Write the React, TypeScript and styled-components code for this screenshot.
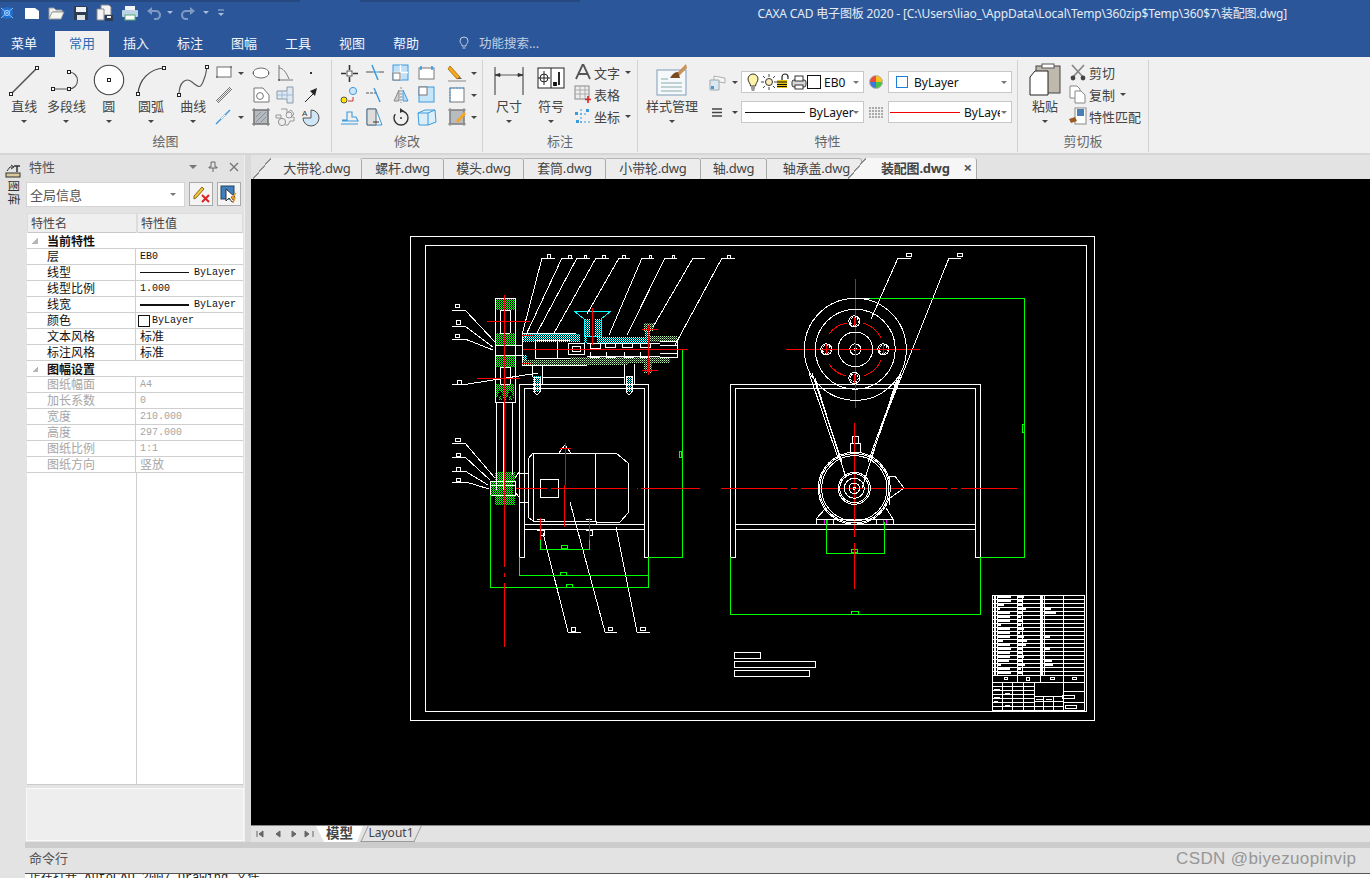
import React from "react";
import styled, { createGlobalStyle } from "styled-components";

const UI = `"Noto Sans", "Noto Sans CJK SC", "Liberation Sans", sans-serif`;
const Global = createGlobalStyle`
  html, body { margin: 0; padding: 0; background: #e3e3e3; overflow: hidden; }
  * { box-sizing: border-box; }
`;

const Page = styled.div`
  position: relative; width: 1370px; height: 878px; overflow: hidden; display: flex; flex-direction: column;
  font-family: ${UI}; font-size: 13px; color: #444; background: #e3e3e3;
`;
const TitleBar = styled.div`
  height: 31px; flex: none; display: flex; align-items: center; padding: 0 83px 6px 0;
  background: linear-gradient(to right, #26497f 0 300px, transparent 300px 360px, #26497f 360px 580px, transparent 580px) 0 0 / 100% 2px no-repeat, #2b579a;
`;
const Quick = styled.div`display: flex; align-items: center; height: 20px;`;
const QSlot = styled.span<{ $w: number }>`width: ${p => p.$w}px; height: 20px; display: flex; align-items: center; justify-content: center; flex: none;`;
const TitleText = styled.div`margin-left: auto; color: #e6ebf3; font-size: 12px; letter-spacing: -0.16px; white-space: nowrap;`;
const MenuBar = styled.div`height: 26px; flex: none; background: #2b579a; display: flex; align-items: stretch;`;
const MenuTab = styled.div<{ $active?: boolean; $w?: number; $pr?: number }>`
  width: ${p => p.$w ?? 54}px; padding: 0 ${p => p.$pr ?? 0}px 3px 0; display: flex; align-items: center; justify-content: center; font-size: 13px;
  color: ${p => (p.$active ? "#2b6cb0" : "#f2f5fa")}; background: ${p => (p.$active ? "#f0f0f0" : "transparent")};
`;
const Search = styled.div`display: flex; align-items: center; gap: 8px; margin-left: 24px; padding-bottom: 3px; color: #c3cfe2; font-size: 12.5px;`;

const Ribbon = styled.div`height: 98px; flex: none; background: #f0f0f0; border-bottom: 2px solid #d6d6d6; display: flex; align-items: flex-start; padding-top: 3px;`;
const Group = styled.div<{ $w: number; $pl?: number; $line?: boolean }>`
  width: ${p => p.$w}px; height: 92px; flex: none; position: relative; display: flex; align-items: flex-start; padding: 2px 0 0 ${p => p.$pl ?? 0}px;
  border-right: ${p => (p.$line === false ? "none" : "1px solid #d2d2d2")};
`;
const GroupLabel = styled.div`position: absolute; left: 0; right: 0; bottom: 2px; height: 18px; line-height: 18px; text-align: center; font-size: 13px; color: #666;`;
const Large = styled.div<{ $w: number }>`width: ${p => p.$w}px; flex: none; display: flex; flex-direction: column; align-items: center;`;
const LargeIcon = styled.div`height: 36px; display: flex; align-items: center; justify-content: center;`;
const LargeLabel = styled.div`height: 18px; line-height: 16px; font-size: 13px; color: #444; white-space: nowrap;`;
const Caret = styled.i<{ $d?: string }>`
  display: block; flex: none; width: 0; height: 0; border-left: 3px solid transparent; border-right: 3px solid transparent; border-top: 3px solid ${p => p.$d ?? "#444"};
`;
const CaretRow = styled.div`height: 10px; display: flex; align-items: center;`;
const SmallGrid = styled.div<{ $cols: string }>`display: grid; grid-template-columns: ${p => p.$cols}; grid-auto-rows: 22px;`;
const Cell = styled.div<{ $left?: boolean }>`display: flex; align-items: center; justify-content: ${p => (p.$left ? "flex-start" : "center")}; gap: 4px; position: relative;`;
const TextRows = styled.div`display: flex; flex-direction: column;`;
const TextRow = styled.div<{ $iw: number }>`
  height: 22px; display: flex; align-items: center; padding-bottom: 2px; font-size: 13px; color: #444; white-space: nowrap;
  & > svg { margin: 0 ${p => (p.$iw - 20) / 2}px; flex: none; }
  & > i { margin-left: 5px; }
`;
const PropRows = styled.div`display: flex; flex-direction: column; gap: 8px; padding-top: 9px;`;
const PropRow = styled.div`display: flex; align-items: center; height: 22px;`;
const PropIcon = styled.div<{ $w: number }>`width: ${p => p.$w}px; flex: none; display: flex; align-items: center; justify-content: center; gap: 5px;`;
const Combo = styled.div<{ $w: number; $pl?: number; $gap?: number }>`
  width: ${p => p.$w}px; height: 22px; flex: none; background: #fff; border: 1px solid #c8c8c8; display: flex; align-items: center; padding: 0 0 0 ${p => p.$pl ?? 3}px; gap: ${p => p.$gap ?? 4}px;
  font-size: 12px; color: #111; overflow: hidden; position: relative;
`;
const ComboCaret = styled.i`position: absolute; right: 4px; top: 9px; width: 0; height: 0; border-left: 3px solid transparent; border-right: 3px solid transparent; border-top: 3px solid #777;`;
const LineSample = styled.span<{ $c: string; $w: number; $h?: number }>`display: inline-block; flex: none; width: ${p => p.$w}px; height: ${p => p.$h ?? 1}px; background: ${p => p.$c};`;
const Swatch = styled.span<{ $c: string; $s?: number }>`display: inline-block; width: ${p => p.$s ?? 12}px; height: ${p => p.$s ?? 12}px; flex: none; border: 1px solid ${p => p.$c}; background: #fff;`;
const Clip = styled.span<{ $w: number }>`display: inline-block; width: ${p => p.$w}px; overflow: hidden; white-space: nowrap; flex: none;`;

const Work = styled.div`flex: 1; display: flex; min-height: 0;`;
const Strip = styled.div`width: 25px; flex: none; display: flex; flex-direction: column; align-items: center; padding-top: 8px; gap: 1px;`;
const StripText = styled.div`writing-mode: vertical-rl; text-orientation: sideways; font-size: 12px; color: #333; line-height: 14px; letter-spacing: 1px;`;
const Panel = styled.div`width: 219px; flex: none; display: flex; flex-direction: column; padding-left: 1px;`;
const PanelHead = styled.div`height: 25px; flex: none; display: flex; align-items: center; padding: 0 5px 2px 3px; font-size: 13px; color: #555; gap: 11px; & > span { margin-right: auto; }`;
const ComboRow = styled.div`display: flex; gap: 3px; height: 28px; flex: none; padding-top: 2px;`;
const PanelCombo = styled.div`width: 159px; height: 25px; background: #fff; border: 1px solid #d4d4d4; display: flex; align-items: center; padding: 0 4px 0 3px; font-size: 13px; color: #555; justify-content: space-between; & > i { margin-right: 4px; }`;
const PanelBtn = styled.div`width: 24px; height: 24px; background: #f4f4f4; border: 1px solid #aaa; display: flex; align-items: center; justify-content: center; margin-left: 1px;`;
const Table = styled.div`margin: 5px 1px 0 1px; height: 572px; flex: none; background: #fff; display: flex; flex-direction: column; position: relative; border-bottom: 1px solid #ccc;`;
const TableHead = styled.div`height: 20px; flex: none; display: grid; grid-template-columns: 110px 1fr; background: #efefef; border-bottom: 1px solid #c8c8c8; font-size: 12px; color: #444;`;
const HeadCell = styled.div`padding-left: 3px; line-height: 19px; border: 1px solid #dcdcdc; border-bottom: none;`;
const Row = styled.div<{ $off?: boolean }>`
  height: 16px; flex: none; display: grid; grid-template-columns: 109px 1fr; border-bottom: 1px solid #cfcfcf; font-size: 12px; line-height: 15px;
  color: ${p => (p.$off ? "#a6a6a6" : "#111")};
`;
const Section = styled.div`height: 16px; flex: none; display: flex; align-items: center; padding-left: 5px; gap: 9px; border-bottom: 1px solid #cfcfcf; font-size: 12px; font-weight: 700; color: #111;`;
const Tri = styled.i`display: block; width: 6px; height: 6px; background: linear-gradient(to top left, #b5b5b5 50%, transparent 50%);`;
const NameCell = styled.div`padding-left: 20px; border-right: 1px solid #cfcfcf; white-space: nowrap;`;
const ValCell = styled.div<{ $mono?: boolean; $pl?: number; $gap?: number }>`
  padding-left: ${p => p.$pl ?? 4}px; display: flex; align-items: center; gap: ${p => p.$gap ?? 5}px; white-space: nowrap;
  font-family: ${p => (p.$mono ? `"Liberation Mono", monospace` : UI)}; font-size: ${p => (p.$mono ? "10px" : "12px")};
`;
const ColLine = styled.div`position: absolute; left: 109px; top: 260px; bottom: 0; width: 1px; background: #cfcfcf;`;
const Desc = styled.div`margin-top: 3px; height: 53px; flex: none; background: #eeeeee; border: 1px solid #fafafa;`;
const Gutter = styled.div`width: 7px; flex: none; background: #dadada; border-left: 1px solid #eee;`;
const Doc = styled.div`flex: 1; display: flex; flex-direction: column; min-width: 0;`;
const DocTabs = styled.div`height: 24px; flex: none; display: flex; padding: 3px 0 0 2px; background: #e3e3e3;`;
const tabFill = (c: string) => `linear-gradient(to top left, ${c} calc(50% - .6px), #8d8d8d calc(50% - .6px) calc(50% + .6px), transparent calc(50% + .6px)) 0 0 / 18px 100% no-repeat, linear-gradient(${c}, ${c}) 18px 0 / 100% 100% no-repeat`;
const DocTab = styled.div<{ $w: number; $pl?: number; $active?: boolean; $slant?: boolean }>`
  width: ${p => p.$w}px; flex: none; height: 21px; display: flex; align-items: center; justify-content: ${p => (p.$active ? "flex-start" : "center")};
  padding: 0 0 3px ${p => p.$pl ?? 0}px; font-size: 13px; letter-spacing: -0.2px; color: #444; font-weight: ${p => (p.$active ? 700 : 400)}; position: relative;
  margin-left: ${p => (p.$active ? "-14px" : "0")};
  border-right: 1px solid #aaa; border-top: ${p => (p.$slant ? "none" : "1px solid #b5b5b5")};
  border-top-right-radius: 3px;
  background: ${p => (p.$slant ? tabFill(p.$active ? "#f6f6f6" : "#ececec") : "#ececec")};
`;
const TabClose = styled.span`position: absolute; right: 4px; top: 1px; font-size: 15px; color: #555; line-height: 16px;`;
const Canvas = styled.svg`display: block; width: 1119px; height: 646px; flex: none; background: #000; shape-rendering: crispEdges;`;
const SheetTabs = styled.div`height: 17px; flex: none; display: flex; align-items: stretch; background: #e3e3e3; border-top: 1px solid #888; position: relative;`;
const NavBtns = styled.div`width: 65px; flex: none; display: flex; align-items: center; padding-left: 3px;`;
const ModelTab = styled.div`
  width: 47px; margin-right: -3px; background: #fff; clip-path: polygon(0 0, 100% 0, calc(100% - 6px) 100%, 8px 100%);
  text-align: center; font-size: 13.5px; line-height: 15px; font-weight: 700; color: #444;
`;
const LayoutTab = styled.div`
  width: 54px; margin-left: 4px; font-size: 12px; line-height: 14px; text-align: center; color: #444; position: relative;
  &::before { content: ""; position: absolute; inset: 0; border: 1px solid #9a9a9a; border-top: none; transform: skewX(-25deg); }
`;
const Sash = styled.div`height: 6px; flex: none; margin-left: 25px; background: #cccccc;`;
const CmdHead = styled.div`height: 25px; flex: none; padding: 0 0 0 29px; line-height: 21px; font-size: 13px; color: #555;`;
const Terminal = styled.div`height: 5px; flex: none; margin-left: 25px; background: #fff; border-top: 1px solid #555; overflow: hidden; padding-left: 4px; font-family: "Liberation Mono", "Noto Sans CJK SC", monospace; font-size: 12px; line-height: 8px; color: #222; white-space: nowrap;`;
const Watermark = styled.div`position: absolute; left: 1176px; top: 848px; font-size: 17px; line-height: 22px; color: #969696; letter-spacing: 0.38px; white-space: nowrap; font-family: "Liberation Sans", sans-serif;`;

/* ---------- icons ---------- */
const I = ({ w = 20, h = 20, children }: { w?: number; h?: number; children: React.ReactNode }) => (
  <svg width={w} height={h} viewBox={`0 0 ${w} ${h}`} fill="none" style={{ flex: "none", display: "block" }}>{children}</svg>
);
const Nd = ({ x, y }: { x: number; y: number }) => <rect x={x - 1.5} y={y - 1.5} width={3} height={3} fill="#fff" stroke="#222" />;
const BL = "#3c9ade", GR = "#6d6d6d";

const icLine = <I w={36} h={36}><path d="M5 32 31 6" stroke="#555" strokeWidth={1.6} /><Nd x={5} y={32} /><Nd x={31} y={6} /></I>;
const icPoly = <I w={36} h={36}><path d="M5 27H21M21 10A8.5 8.5 0 0 1 21 27" stroke="#555" strokeWidth={1.1} /><Nd x={5} y={27} /><Nd x={21} y={27} /><Nd x={21} y={10} /></I>;
const icCircle = <I w={36} h={36}><circle cx={18} cy={18} r={14.7} fill="#fff" stroke="#444" strokeWidth={1.1} /><Nd x={18} y={18} /></I>;
const icArc = <I w={36} h={36}><path d="M5 32C6 18 16 7 31 6" stroke="#444" strokeWidth={1.2} /><Nd x={5} y={32} /><Nd x={31} y={6} /></I>;
const icCurve = <I w={36} h={36}><path d="M4 33C4 20 11 15 17 20S25 27 28 20 31 12 32 5" stroke="#555" strokeWidth={1.1} /><Nd x={4} y={33} /><Nd x={32} y={5} /></I>;
const icDim = <I w={34} h={36}><path d="M3 5V33M31 5V33" stroke="#333" strokeWidth={1} /><path d="M3 13H31M3 13l5-1.5v3zM31 13l-5-1.5v3z" stroke="#333" fill="#333" strokeWidth={.8} /></I>;
const icSym = <I w={30} h={36}><rect x={2} y={6} width={26} height={20} fill="#fff" stroke="#222" /><path d="M15 6V26" stroke="#222" /><circle cx={8} cy={16} r={4} stroke="#222" /><path d="M2 16H14M8 9V23" stroke="#222" /><path d="M18 21h2v2h-2zM23 10v13" stroke="#111" strokeWidth={1.8} /></I>;
const icStyle = <I w={36} h={36}><rect x={3} y={8} width={29} height={25} fill="#f6f9fc" stroke="#7d9cb8" /><path d="M7 17H14M7 21H28M7 25H28M7 29H28" stroke="#8aa" /><path d="M32 2 22 12l2 3L33 6z" fill="#c9925a" /><path d="M24 10c-4 0-6 3-8 6h10z" fill="#7a4b1e" /></I>;
const icPaste = <I w={32} h={36}><rect x={7} y={4} width={24} height={27} fill="#bfb8ac" stroke="#444" /><rect x={13} y={2} width={12} height={4} fill="#fff" stroke="#555" /><path d="M1 15 6 9H19V33H1z" fill="#fff" stroke="#222" /></I>;

const ic = {
  rect: <I><rect x={3} y={4} width={14} height={10} fill="#fff" stroke={GR} /><circle cx={3} cy={14} r={1} fill={GR} /><circle cx={17} cy={4} r={1} fill={GR} /></I>,
  dbl: <I><path d="M2 16 16 2M4 18 18 4M3 17 17 3" stroke="#777" strokeWidth={1} /></I>,
  blueLn: <I><path d="M2 17 16 3" stroke={BL} strokeWidth={1.4} /><path d="M7 12 11 8" stroke="#fff" strokeWidth={1} /></I>,
  ell: <I><ellipse cx={10} cy={10} rx={8} ry={5} fill="#fff" stroke={GR} /><path d="M2 10H3M17 10H18" stroke="#333" /></I>,
  house: <I><path d="M3 3H12L18 10V17H3z" fill="#fff" stroke="#777" /><circle cx={9} cy={11} r={3.4} stroke="#777" /></I>,
  hatch: <I><rect x={3} y={3} width={14} height={14} fill="#b4bac0" stroke="#666" /><path d="M1 3H19M1 17H19M3 1V19M17 1V19" stroke="#777" /><path d="M5 15 15 5M5 10 10 5M10 15 15 10" stroke="#8c9197" /></I>,
  axis: <I><path d="M4 2V17H18" stroke="#777" /><path d="M4 5C8 5 11 9 14 16" stroke="#777" /><circle cx={4} cy={17} r={1} fill="#555" /></I>,
  shaft: <I><path d="M2 6H12V2H18V18H12V14H2z" fill="#dfe9f2" stroke="#8a9aa8" /><path d="M2 10H18M7 6V14M12 6V14" stroke="#9fb9d4" /></I>,
  gear: <I w={22}><circle cx={8} cy={15} r={3.6} fill="#eee" stroke="#8f8f8f" /><circle cx={15} cy={8} r={3} stroke="#999" /><path d="M7 2H13V6L17 3 20 7 17 10H20V14H16L14 18H11" stroke="#999" /><path d="M2 8H7V11H2z" stroke="#999" /></I>,
  dot: <I><rect x={9} y={9} width={2} height={2} fill="#333" /></I>,
  arrow: <I><path d="M4 17 12 9" stroke="#222" /><path d="M9 6 16 3 14 11z" fill="#222" /></I>,
  arcA: <I w={22}><path d="M11 3A8 8 0 1 1 3 11H11z" fill="#cfe6f6" stroke="#555" /><text x={2} y={9} fontSize={8} fill="#333" fontFamily="Liberation Sans">A</text></I>,
  move: <I><rect x={8} y={8} width={5} height={5} fill="#fff" stroke="#555" /><path d="M10.5 2V7M10.5 14V19M2 10.5H7M14 10.5H19" stroke="#333" strokeWidth={1.6} /></I>,
  trim: <I><path d="M1 9H8M14 9H19" stroke="#555" /><path d="M7 2 13 17" stroke={BL} strokeWidth={1.5} /><path d="M8 9H14" stroke={BL} /></I>,
  array: <I><rect x={2} y={2} width={15} height={15} fill="#bfe0f6" stroke={BL} /><path d="M9.5 2V17M2 9.5H17" stroke="#fff" strokeWidth={1.4} /><rect x={2} y={10} width={7} height={7} fill="#fff" stroke="#777" /></I>,
  tabs: <I><rect x={2} y={5} width={15} height={11} fill="#fff" stroke="#777" /><path d="M4 3V7M15 3V7" stroke={BL} strokeWidth={1.6} /></I>,
  pencil: <I><path d="M3 3 13 14 10 16 1 6z" fill="#f5a623" stroke="#b87d10" /><path d="M10 16 15 16 13 14z" fill="#6a5a4a" /><path d="M1 18H19" stroke="#888" /></I>,
  fillet: <I><circle cx={5} cy={15} r={3} fill="#ffe600" stroke="#555" /><circle cx={14} cy={6} r={3.6} fill="#cfe6f6" stroke={BL} /><path d="M9 16H14V12" stroke="#c33" /></I>,
  dash: <I><path d="M1 8H12" stroke="#555" strokeDasharray="3 1" /><path d="M9 3 15 17" stroke={BL} strokeWidth={1.4} /></I>,
  mirror: <I><path d="M8 5 3 16H8z" fill="#d0d0d0" stroke="#888" /><path d="M12 5 17 16H12z" fill="#bcdcf2" stroke={BL} /><path d="M10 2V18" stroke="#888" strokeDasharray="2 1" /></I>,
  panel: <I><rect x={2} y={2} width={15} height={15} fill="#c7e5f8" stroke={BL} /><rect x={2} y={2} width={8} height={8} fill="#fff" stroke="#777" /></I>,
  dashRect: <I><rect x={3} y={3} width={14} height={14} fill="#fff" stroke="#777" /><path d="M3 3H17M3 3V17" stroke={BL} strokeDasharray="2 1" /></I>,
  stamp: <I><path d="M3 13H8V5H13V10H17L19 14H3M2 17H19" stroke={BL} strokeWidth={1.1} /></I>,
  page: <I><path d="M2 2H11L17 18H2z" fill="#eef6fc" stroke={BL} /><path d="M2 2H11V18H2z" fill="#ddd" stroke="#666" /><path d="M8 15H14" stroke="#333" /></I>,
  rotate: <I><circle cx={10} cy={11} r={7} stroke="#333" strokeWidth={1.4} strokeDasharray="26 6" /><circle cx={10} cy={11} r={1} fill="#333" /><path d="M9 1 13 4 9 6z" fill="#333" /></I>,
  box3d: <I w={22}><path d="M2 6 9 3H19L20 15 12 18H3z" fill="#dceefa" stroke={BL} /><path d="M2 6H12V18M12 6 19 3" stroke={BL} /></I>,
  hatchPen: <I><rect x={3} y={3} width={14} height={14} fill="#b8bcc0" stroke="#666" /><path d="M1 3H19M1 17H19M3 1V19M17 1V19" stroke="#888" /><path d="M9 14 17 5 19 7 11 16z" fill="#f5a623" /></I>,
  text: <I><path d="M3 17 9.5 3H10.5L17 17M6 12H14" stroke="#555" strokeWidth={1.8} /></I>,
  table: <I><rect x={2} y={2} width={14} height={13} fill="#eee" stroke="#888" /><path d="M2 6H16M2 10H16M7 2V15M12 2V15" stroke="#aaa" /><path d="M15 12V19M12 15.5H18" stroke="#d22" strokeWidth={1.6} /></I>,
  coord: <I><path d="M3 16H17M8 3V19" stroke={BL} strokeDasharray="2 2" /><path d="M3 8H15" stroke={BL} strokeDasharray="2 2" /><rect x={2} y={6} width={3} height={3} fill={BL} /><rect x={13} y={3} width={3} height={3} fill={BL} /><rect x={3} y={14} width={3} height={3} fill={BL} /></I>,
  layers: <I><path d="M7 4 18 6V11L7 9z" fill="#f4f4f4" stroke="#b0b0b0" /><path d="M3 8H12V18H3z" fill="#dde7f1" stroke="#9aa" /><rect x={4} y={14} width={3} height={3} fill={BL} /></I>,
  lines: <I><path d="M5 7H15M5 10.5H15M5 14H15" stroke="#444" strokeWidth={1.3} /></I>,
  wheel: <I><circle cx={10} cy={10} r={6.5} fill="#e94b3c" /><path d="M10 10V3.5A6.5 6.5 0 0 1 16.5 10z" fill="#f6c21c" /><path d="M10 10H16.5A6.5 6.5 0 0 1 10 16.5z" fill="#4bbf4b" /><path d="M10 10V16.5A6.5 6.5 0 0 1 3.5 10z" fill="#3b78e0" /><circle cx={10} cy={10} r={6.5} stroke="#bbb" /></I>,
  weight: <I><path d="M3 6H17M3 9H17M3 12H17M3 15H17" stroke="#666" strokeDasharray="2 1" /></I>,
  cut: <I><path d="M4 3 15 15M16 3 5 15" stroke="#888" strokeWidth={1.8} /><circle cx={5} cy={16} r={2.4} fill="#444" /><circle cx={15} cy={16} r={2.4} fill="#444" /></I>,
  copy: <I><path d="M2 2H9L12 5V14H2z" fill="#fff" stroke="#888" /><path d="M7 7H13L17 11V19H7z" fill="#fff" stroke="#888" /></I>,
  match: <I><rect x={7} y={2} width={11} height={16} fill="#fff" stroke="#888" /><rect x={9} y={3} width={7} height={7} fill="#4a7fb5" /><path d="M1 13 7 11 9 15 3 17z" fill="#9a5a22" /></I>,
  bulb: <I w={16} h={22}><path d="M3 8A5 5 0 0 1 13 8C13 11 10.5 12 10.5 15H5.5C5.5 12 3 11 3 8z" fill="#fff3a8" stroke="#333" /><path d="M6 17H10M6.5 19H9.5" stroke="#333" /></I>,
  sun: <I w={16} h={22}><circle cx={8} cy={11} r={3.5} fill="#ffeebb" stroke="#333" /><path d="M8 3V6M8 16V19M0 11H3M13 11H16M2 5 4 7M12 15 14 17M14 5 12 7M4 15 2 17" stroke="#444" /></I>,
  lock: <I w={14} h={22}><path d="M5 9V6A3 3 0 0 1 11 6V8" stroke="#222" strokeWidth={1.2} /><rect x={0} y={9} width={10} height={8} fill="#e6c612" /><path d="M0 11H10M0 13.5H10M0 15.5H10" stroke="#111" /></I>,
  printer: <I w={16} h={22}><rect x={1} y={9} width={14} height={7} rx={2} fill="#d8d8d8" stroke="#333" /><rect x={4} y={5} width={8} height={5} fill="#fff" stroke="#333" /><rect x={4} y={14} width={8} height={4} fill="#fff" stroke="#333" /></I>,
};

const Q = {
  logo: <I w={14} h={18}><circle cx={6} cy={9} r={6} fill="#1f6fd0" /><circle cx={6} cy={9} r={2.5} stroke="#b8dcff" /><path d="M0 4 12 14M12 4 0 14" stroke="#8ac4ff" /></I>,
  doc: <I w={16} h={16}><path d="M1 3H11L15 6V14H1z" fill="#fff" /></I>,
  open: <I w={17} h={16}><path d="M1 3H6L8 5H14V7H5L2 14H1z" fill="#eee" stroke="#999" /><path d="M4 7H16L13 14H1z" fill="#f7f7f2" stroke="#999" /></I>,
  save: <I w={16} h={16}><path d="M1 1H13L15 3V15H1z" fill="#2d3c52" /><rect x={3} y={2} width={10} height={5} fill="#eef2f6" /><rect x={4} y={10} width={8} height={5} fill="#dfe3e8" /></I>,
  saveAll: <I w={18} h={18}><path d="M5 1H13L15 3V11H5z" fill="#f4f4f4" stroke="#888" /><path d="M1 5H8V16H1z" fill="#f4f4f4" stroke="#888" /><rect x={9} y={11} width={8} height={6} fill="#2d3c52" /><rect x={11} y={12} width={4} height={2} fill="#fff" /></I>,
  print: <I w={18} h={16}><rect x={4} y={1} width={10} height={5} fill="#f3f3f3" /><rect x={1} y={5} width={16} height={7} rx={1} fill="#bcd3e6" /><rect x={4} y={10} width={10} height={5} fill="#fff" stroke="#5a7" /></I>,
  undo: <I w={16} h={14}><path d="M3 5H10A4 4 0 0 1 10 13H8" stroke="#7e99c2" strokeWidth={2.2} /><path d="M6 1 1 5 6 9z" fill="#7e99c2" /></I>,
  redo: <I w={16} h={14}><path d="M13 5H6A4 4 0 0 0 6 13H8" stroke="#7e99c2" strokeWidth={2.2} /><path d="M10 1 15 5 10 9z" fill="#7e99c2" /></I>,
  cust: <I w={8} h={10}><path d="M1 2H7" stroke="#a9bcd8" /><path d="M1 5H7L4 8z" fill="#a9bcd8" /></I>,
  bulb: <I w={14} h={16}><path d="M3 6A4 4 0 0 1 11 6C11 8 9 9 9 11H5C5 9 3 8 3 6zM5.5 13H8.5" stroke="#c3cfe2" strokeWidth={1} /></I>,
};

/* ---------- drawing ---------- */
const Lines = ({ c, w = 1, d }: { c: string; w?: number; d: string[] }) => (
  <g stroke={c} strokeWidth={w} fill="none">{d.map((p, i) => <polyline key={i} points={p} />)}</g>
);
const Marks = ({ c, r }: { c: string; r: number[][] }) => (
  <g stroke={c} fill="none">{r.map(([x, y, w, h], i) => <rect key={i} x={x + 0.5} y={y + 0.5} width={w} height={h} />)}</g>
);
const whiteLines = [
  "410,236 1094,236 1094,720 410,720 410,236",
  "555,258 542,258 522,335", "573,258 562,258 525,337", "590,258 577,258 537,333", "609,258 596,258 554,333",
  "630,258 619,258 587,314", "654,258 642,258 609,335", "677,258 665,258 627,335", "705,258 693,258 653,327",
  "735,258 722,258 675,345",
  "452,310 465,310 495,342", "452,326 465,326 493,347", "452,339 465,339 493,350", "452,384 468,384 538,373",
  "452,443 465,443 495,478", "452,457 465,457 490,480", "452,471 465,471 488,485", "452,482 466,482 489,489",
  "543,533 568,632 581,632", "570,502 605,632 617,632", "616,527 637,632 650,632",
  "871,319 898,258 911,258", "888,410 949,258 961,258",
  "519,557 519,384 648,384 648,557 644,557 644,388 524,388 524,557 519,557",
  "524,524 644,524", "524,529 644,529",
  "532,365 532,377", "542,365 542,384", "624,364 624,384", "634,364 634,384", "542,377 624,377",
  "495,298 515,298 515,402 495,402 495,298", "496,402 496,490", "512,402 512,475", "500,310 510,310", "500,333 510,333", "500,367 510,367", "500,384 510,384",
  "500,310 500,333", "510,310 510,333", "500,367 500,384", "510,367 510,384", "495,345 515,345", "495,355 515,355",
  "515,345 522,345", "515,355 522,355",
  "522,333 522,365 587,365", "522,333 576,333", "535,340 535,358", "557,340 557,358", "535,340 570,340", "535,358 570,358",
  "568,343 584,343 584,354 568,354 568,343", "572,346 580,346 580,351 572,351 572,346",
  "587,343 660,343", "587,356 660,356", "590,343 590,348 600,348 600,343", "605,343 605,347 615,347 615,343", "622,343 622,347 632,347 632,343", "640,343 640,347 650,347 650,343",
  "590,352 590,357 600,357", "606,352 606,357 616,357", "624,352 624,357 634,357", "640,352 640,357 650,357",
  "660,345 677,345", "660,353 677,353", "660,341 677,341 677,357 660,357",
  "533,453 616,453 628,463 628,513 620,522 596,522", "533,453 528,459 528,517 533,521 596,521 596,524", "533,453 533,521", "595,453 595,521",
  "540,479 558,479 558,497 540,497 540,479", "519,473 528,473", "519,502 528,502",
  "559,453 565,445 571,453 559,453", "490,481 515,481 515,495 490,495 490,481", "490,485 515,485", "515,478 519,472", "515,492 519,497",
  "537,519 544,519 544,521", "537,530 544,530 544,535 540,535 540,530", "586,519 592,519", "586,530 592,530 592,535 589,535",
  "730,557 730,384 980,384 980,557 975,557 975,388 735,388 735,557 730,557",
  "735,524 975,524", "735,529 975,529",
  "809,373 838,458", "812,373 842,462", "815,378 846,478", "901,373 871,458", "899,377 868,462", "897,380 865,478", "896,382 862,488",
  "852,443 852,436 858,436 858,443", "850,452 850,443 860,443 860,452 850,452",
  "890,476 895,476 904,488 890,498 889,505", "890,476 888,485",
  "816,519 826,508", "886,508 893,519", "816,519 893,519", "816,519 816,524", "893,519 893,524", "833,519 833,524", "876,519 876,524",
];
const redLines = [
  "504,295 504,567", "504,573 504,577", "504,583 504,647", "487,321 530,321", "477,378 520,378",
  "523,349 688,349", "592,308 592,345", "522,335 534,335", "522,363 532,363", "648,325 648,375", "642,329 658,329", "642,370 658,370",
  "516,488 547,488", "551,488 627,488", "637,488 638,488", "641,488 700,488", "565,443 565,485", "560,448 571,448", "564,485 564,527",
  "540,518 540,540", "589,518 589,540",
  "786,349 920,349", "855,279 855,408",
  "721,488 787,488", "791,488 797,488", "801,488 947,488", "951,488 957,488", "961,488 1017,488",
  "854,423 854,537", "854,543 854,589",
];
const greenLines = [
  "682,349 682,557 648,557", "540,531 540,549 589,549 589,530", "519,557 519,575 648,575 648,557", "490,495 490,587 648,587 648,575",
  "855,298 1025,298", "1024,298 1024,557", "980,557 1025,557", "730,557 730,614 980,614 980,557", "826,520 826,553 884,553 884,522",
];
const greenMarks = [[679, 451, 2, 6], [561, 545, 6, 3], [560, 572, 6, 3], [566, 584, 6, 3], [1022, 424, 2, 8], [851, 611, 7, 3], [851, 549, 6, 3]];
const whiteMarks = [
  [547, 254, 3, 4], [568, 255, 3, 3], [584, 255, 2, 3], [602, 255, 3, 3], [622, 255, 3, 3], [649, 255, 2, 3], [672, 255, 2, 3], [727, 255, 3, 3],
  [455, 304, 4, 3], [456, 320, 4, 4], [455, 334, 4, 3], [457, 380, 4, 4], [455, 438, 5, 3], [456, 453, 4, 3], [456, 467, 4, 4], [456, 478, 4, 3],
  [571, 627, 4, 4], [608, 627, 4, 3], [640, 627, 5, 3], [906, 253, 5, 3], [957, 253, 5, 3],
  [734, 652, 26, 6], [734, 661, 81, 6], [734, 670, 75, 6],
];

const Hatch = ({ f, x, y, w, h }: { f: string; x: number; y: number; w: number; h: number }) => <rect x={x} y={y} width={w} height={h} fill={`url(#${f})`} />;

const tbRows = Array.from({ length: 20 }, (_, i) => 595 + i * 4);
const tbA = [13, 13, 6, 2, 12, 12, 12, 3, 12, 12, 12, 5, 12, 13, 12, 12, 11, 3, 12, 13];
const tbB = [6, 4, 5, 8, 5, 3, 4, 3, 6, 2, 6, 9, 8, 4, 5, 6, 4, 7, 3, 5];
const tbC = [0, 0, 0, 6, 11, 0, 0, 0, 0, 0, 5, 0, 0, 5, 0, 0, 7, 8, 0, 0];

const TitleBlockDrawing = () => (
  <g stroke="#fff" fill="none">
    <rect x={992.5} y={595.5} width={92} height={115} />
    {tbRows.map(y => <path key={y} d={`M992 ${y}.5H1085`} />)}
    {[997, 1017, 1022, 1040, 1044, 1063].map(x => <path key={x} d={`M${x}.5 595V675`} />)}
    {tbRows.map((y, i) => (
      <g key={y} fill="#fff" stroke="none">
        <rect x={994} y={y + 1} width={2} height={3} />
        <rect x={998} y={y + 1} width={tbA[i]} height={2} />
        <rect x={1018} y={y + 1} width={tbB[i]} height={2} />
        <rect x={1041} y={y + 1} width={2} height={3} />
        {tbC[i] > 0 && <rect x={1045} y={y + 1} width={tbC[i]} height={2} />}
      </g>
    ))}
    <path d="M992 675.5H1085M992 682.5H1085M1017.5 675V682M1040.5 675V682M1063.5 675V711M1034.5 682V711" />
    <path d="M992 686.5H1034M992 690.5H1034M992 694.5H1034M992 698.5H1034M992 702.5H1034M992 706.5H1034" />
    <path d="M1002.5 682V711M1012.5 682V711M1023.5 682V711" />
    <path d="M1034 696.5H1063M1034 701.5H1063M1034 706.5H1063M1043.5 696V711M1053.5 696V711M1063 691.5H1085M1063 702.5H1085" />
    <rect x={1004.5} y={677.5} width={3} height={2} /><rect x={1026.5} y={677.5} width={3} height={3} /><rect x={1050.5} y={677.5} width={4} height={2} /><rect x={1072.5} y={677.5} width={4} height={2} />
    <rect x={1062.5} y={695.5} width={12} height={3} /><rect x={1065.5} y={705.5} width={11} height={3} />
    <path d="M994 689h6M994 697h6M994 701h4M1005 693h5M1005 705h5M1036 699h8M1046 699h6" />
  </g>
);

const Drawing = () => (
  <Canvas viewBox="251 179 1119 646">
    <defs>
      <pattern id="gh" width={2} height={2} patternUnits="userSpaceOnUse">
        <rect width={1} height={1} fill="#00ff00" /><rect x={1} y={1} width={1} height={1} fill="#00ff00" />
      </pattern>
      <pattern id="lg" width={2} height={2} patternUnits="userSpaceOnUse">
        <rect width={1} height={1} fill="#b8ffb0" /><rect x={1} y={1} width={1} height={1} fill="#30a030" />
      </pattern>
      <pattern id="cy" width={2} height={2} patternUnits="userSpaceOnUse">
        <rect width={1} height={1} fill="#00ffff" /><rect x={1} y={1} width={1} height={1} fill="#e0ffff" />
      </pattern>
    </defs>
    <path d="M425 245.5H1086V711.5H425Z" fill="none" stroke="#fff" />
    <Hatch f="gh" x={495} y={299} w={20} h={11} />
    <Hatch f="gh" x={495} y={333} w={20} h={12} />
    <Hatch f="gh" x={495} y={355} w={20} h={12} />
    <Hatch f="gh" x={496} y={384} w={18} h={16} />
    <Hatch f="cy" x={522} y={334} w={58} h={8} />
    <Hatch f="cy" x={522} y={355} w={5} h={10} />
    <Hatch f="cy" x={584} y={335} w={3} h={8} />
    <polygon points="584,319 590,319 590,336 584,336" fill="url(#cy)" />
    <polygon points="601,319 601,336 595,336 595,319" fill="url(#cy)" />
    <polyline points="574,311 611,311 601,319 601,336 584,336 584,319 574,311" stroke="#00ffff" fill="none" />
    <Hatch f="cy" x={597} y={337} w={52} h={6} />
    <Hatch f="cy" x={645} y={325} w={5} h={14} />
    <Hatch f="lg" x={649} y={336} w={28} h={6} />
    <Hatch f="lg" x={522} y={360} w={106} h={5} />
    <Hatch f="lg" x={570} y={357} w={100} h={6} />
    <Hatch f="lg" x={644} y={323} w={10} h={8} />
    <Hatch f="lg" x={644} y={357} w={8} h={16} />
    <Hatch f="cy" x={533} y={376} w={8} h={16} />
    <Hatch f="cy" x={626} y={376} w={6} h={16} />
    <path d="M534 377H540V392L537 395 534 392zM626 376H632V392L629 395 626 392z" stroke="#fff" fill="none" />
    <Hatch f="gh" x={495} y={472} w={20} h={10} />
    <Hatch f="gh" x={491} y={482} w={22} h={13} />
    <Hatch f="gh" x={495} y={495} w={20} h={10} />
    <path d="M497 400 500 392 503 400M507 400 510 392 513 400" stroke="#000" strokeWidth={2} fill="none" />
    <Lines c="#ffffff" d={whiteLines} />
    <path d="M504 402V490" stroke="#fff" strokeWidth={2} />
    <Marks c="#ffffff" r={whiteMarks} />
    <Lines c="#00ff00" d={greenLines} />
    <Marks c="#00ff00" r={greenMarks} />
    <Lines c="#ff0000" d={redLines} />
    <g fill="none" stroke="#fff">
      {[51, 40, 17.3, 5.5, 1].map(r => <circle key={r} cx={855.3} cy={349.3} r={r} />)}
      {[[854.3, 321.3], [826.3, 349.3], [883.3, 349.3], [854.3, 378]].map(([x, y], i) => (
        <g key={i}><circle cx={x} cy={y} r={5.5} /><circle cx={x} cy={y} r={4} strokeDasharray="2 1" /></g>
      ))}
      {[36, 34.7, 32.7, 16, 14.5, 10, 5.3, 1].map(r => <circle key={r} cx={854.3} cy={488.3} r={r} />)}
    </g>
    <g fill="none" stroke="#f00">
      <path d="M829 334A28 28 0 0 1 847 323M863 323A28 28 0 0 1 881 338M881 360A28 28 0 0 1 864 376M846 376A28 28 0 0 1 829 364" />
      <path d="M855 343V356M848 349H862M854 317V326M826 344V354M883 344V354M854 374V383M821 349H832M878 349H889" />
    </g>
    <path d="M824 520V524M827 520V524M883 520V524M886 520V524" stroke="#f0f" />
    <path d="M855 298H870" stroke="#fff" />
    <TitleBlockDrawing />
  </Canvas>
);

/* ---------- page ---------- */
const LargeBtn = ({ w, icon, label }: { w: number; icon: React.ReactNode; label: string }) => (
  <Large $w={w}>
    <LargeIcon>{icon}</LargeIcon>
    <LargeLabel>{label}</LargeLabel>
    <CaretRow><Caret /></CaretRow>
  </Large>
);
const rowsA: { n: string; v: React.ReactNode; m?: boolean; c?: boolean }[] = [
  { n: "层", v: "EB0", m: true },
  { n: "线型", v: <><LineSample $c="#111" $w={49} />ByLayer</>, m: true },
  { n: "线型比例", v: "1.000", m: true },
  { n: "线宽", v: <><LineSample $c="#111" $w={49} $h={2} />ByLayer</>, m: true },
  { n: "颜色", v: <><Swatch $c="#111" />ByLayer</>, m: true, c: true },
  { n: "文本风格", v: "标准" },
  { n: "标注风格", v: "标准" },
];
const rowsB: { n: string; v: string; m?: boolean }[] = [
  { n: "图纸幅面", v: "A4", m: true }, { n: "加长系数", v: "0", m: true }, { n: "宽度", v: "210.000", m: true },
  { n: "高度", v: "297.000", m: true }, { n: "图纸比例", v: "1:1", m: true }, { n: "图纸方向", v: "竖放" },
];
const tabs: { t: string; w: number; pl?: number; s?: boolean }[] = [
  { t: "大带轮.dwg", w: 109, pl: 20, s: true }, { t: "螺杆.dwg", w: 82 }, { t: "模头.dwg", w: 80 }, { t: "套筒.dwg", w: 82 },
  { t: "小带轮.dwg", w: 95 }, { t: "轴.dwg", w: 66 }, { t: "轴承盖.dwg", w: 95, pl: 5 },
];
const largeDraw: [string, React.ReactNode][] = [["直线", icLine], ["多段线", icPoly], ["圆", icCircle], ["圆弧", icArc], ["曲线", icCurve]];

export default function App() {
  return (
    <Page>
      <Global />
      <TitleBar>
        <Quick>
          <QSlot $w={16}>{Q.logo}</QSlot><QSlot $w={32}>{Q.doc}</QSlot><QSlot $w={16}>{Q.open}</QSlot>
          <QSlot $w={33}>{Q.save}</QSlot><QSlot $w={16}>{Q.saveAll}</QSlot><QSlot $w={33}>{Q.print}</QSlot>
          <QSlot $w={16}>{Q.undo}</QSlot><QSlot $w={16}><Caret $d="#a9bcd8" /></QSlot><QSlot $w={20}>{Q.redo}</QSlot>
          <QSlot $w={16}><Caret $d="#a9bcd8" /></QSlot><QSlot $w={14}>{Q.cust}</QSlot>
        </Quick>
        <TitleText>CAXA CAD 电子图板 2020 - [C:\Users\liao_\AppData\Local\Temp\360zip$Temp\360$7\装配图.dwg]</TitleText>
      </TitleBar>
      <MenuBar>
        <MenuTab $w={55} $pr={7}>菜单</MenuTab>
        <MenuTab $active>常用</MenuTab>
        {["插入", "标注", "图幅", "工具", "视图", "帮助"].map(t => <MenuTab key={t}>{t}</MenuTab>)}
        <Search>{Q.bulb}功能搜索...</Search>
      </MenuBar>
      <Ribbon>
        <Group $w={332} $pl={3}>
          {largeDraw.map(([l, c]) => <LargeBtn key={l} w={42.3} label={l} icon={c} />)}
          <SmallGrid $cols="36px 22px 26px 26px">
            <Cell $left>{ic.rect}<Caret /></Cell><Cell>{ic.ell}</Cell><Cell>{ic.axis}</Cell><Cell>{ic.dot}</Cell>
            <Cell $left>{ic.dbl}</Cell><Cell>{ic.house}</Cell><Cell>{ic.shaft}</Cell><Cell>{ic.arrow}</Cell>
            <Cell $left>{ic.blueLn}<Caret /></Cell><Cell>{ic.hatch}</Cell><Cell>{ic.gear}</Cell><Cell>{ic.arcA}</Cell>
          </SmallGrid>
          <GroupLabel>绘图</GroupLabel>
        </Group>
        <Group $w={151} $pl={4}>
          <SmallGrid $cols="26px 26px 26px 26px 36px">
            <Cell>{ic.move}</Cell><Cell>{ic.trim}</Cell><Cell>{ic.array}</Cell><Cell>{ic.tabs}</Cell><Cell $left>&nbsp;{ic.pencil}<Caret /></Cell>
            <Cell>{ic.fillet}</Cell><Cell>{ic.dash}</Cell><Cell>{ic.mirror}</Cell><Cell>{ic.panel}</Cell><Cell $left>&nbsp;{ic.dashRect}<Caret /></Cell>
            <Cell>{ic.stamp}</Cell><Cell>{ic.page}</Cell><Cell>{ic.rotate}</Cell><Cell>{ic.box3d}</Cell><Cell $left>&nbsp;{ic.hatchPen}<Caret /></Cell>
          </SmallGrid>
          <GroupLabel>修改</GroupLabel>
        </Group>
        <Group $w={155} $pl={5}>
          <LargeBtn w={42} label="尺寸" icon={icDim} />
          <LargeBtn w={42} label="符号" icon={icSym} />
          <TextRows>
            <TextRow $iw={22}>{ic.text}文字<Caret /></TextRow>
            <TextRow $iw={22}>{ic.table}表格</TextRow>
            <TextRow $iw={22}>{ic.coord}坐标<Caret /></TextRow>
          </TextRows>
          <GroupLabel>标注</GroupLabel>
        </Group>
        <Group $w={380} $pl={2}>
          <LargeBtn w={64} label="样式管理" icon={icStyle} />
          <PropRows>
            <PropRow>
              <PropIcon $w={37}>{ic.layers}<Caret /></PropIcon>
              <Combo $w={123} $gap={0}>{ic.bulb}{ic.sun}{ic.lock}{ic.printer}<Swatch $c="#111" $s={14} />&nbsp;EB0<ComboCaret /></Combo>
              <PropIcon $w={24}>{ic.wheel}</PropIcon>
              <Combo $w={124} $pl={7} $gap={6}><Swatch $c="#1a7fd8" />ByLayer<ComboCaret /></Combo>
            </PropRow>
            <PropRow>
              <PropIcon $w={37}>{ic.lines}<Caret /></PropIcon>
              <Combo $w={123}><LineSample $c="#111" $w={60} />ByLayer<ComboCaret /></Combo>
              <PropIcon $w={24}>{ic.weight}</PropIcon>
              <Combo $w={124} $pl={1}><LineSample $c="#e00" $w={70} /><Clip $w={36}>ByLayer</Clip><ComboCaret /></Combo>
            </PropRow>
          </PropRows>
          <GroupLabel>特性</GroupLabel>
        </Group>
        <Group $w={131} $pl={5}>
          <LargeBtn w={44} label="粘贴" icon={icPaste} />
          <TextRows>
            <TextRow $iw={22}>{ic.cut}剪切</TextRow>
            <TextRow $iw={22}>{ic.copy}复制<Caret /></TextRow>
            <TextRow $iw={22}>{ic.match}特性匹配</TextRow>
          </TextRows>
          <GroupLabel>剪切板</GroupLabel>
        </Group>
      </Ribbon>
      <Work>
        <Strip>
          <I w={16} h={16}><path d="M2 8 5 4H8M6 2 9 4 6 6" stroke="#333" /><path d="M9 3H15M12 3V9" stroke="#333" strokeWidth={1.5} /><rect x={1} y={10} width={14} height={4} fill="#d8c99a" stroke="#333" /></I>
          <StripText>图库</StripText>
        </Strip>
        <Panel>
          <PanelHead>
            <span>特性</span>
            <Caret $d="#777" style={{ borderLeftWidth: 4, borderRightWidth: 4, borderTopWidth: 4 }} />
            <I w={10} h={12}><path d="M3 1H7V6H9V7H1V6H3zM5 7V11" stroke="#666" /></I>
            <I w={10} h={12}><path d="M1 2 9 10M9 2 1 10" stroke="#777" strokeWidth={1.4} /></I>
          </PanelHead>
          <ComboRow>
            <PanelCombo>全局信息<Caret $d="#777" /></PanelCombo>
            <PanelBtn><I><path d="M3 12 11 3 13 5 5 14 3 15z" fill="#f5c542" stroke="#8a6a10" /><path d="M11 11 18 18M18 11 11 18" stroke="#d22" strokeWidth={2} /></I></PanelBtn>
            <PanelBtn><I><rect x={2} y={2} width={13} height={13} fill="#3f7fc0" stroke="#245" /><path d="M7 5 7 17 10 14 13 18 15 17 12 13 16 13z" fill="#fff" stroke="#333" /><path d="M17 9 13 14H16L14 19" stroke="#f0a020" strokeWidth={1.4} /></I></PanelBtn>
          </ComboRow>
          <Table>
            <TableHead><HeadCell>特性名</HeadCell><HeadCell>特性值</HeadCell></TableHead>
            <Section><Tri />当前特性</Section>
            {rowsA.map(r => (
              <Row key={r.n}><NameCell>{r.n}</NameCell><ValCell $mono={r.m} $pl={r.c ? 2 : 4} $gap={r.c ? 2 : 5}>{r.v}</ValCell></Row>
            ))}
            <Section><Tri />图幅设置</Section>
            {rowsB.map(r => (
              <Row key={r.n} $off><NameCell>{r.n}</NameCell><ValCell $mono={r.m}>{r.v}</ValCell></Row>
            ))}
            <ColLine />
          </Table>
          <Desc />
        </Panel>
        <Gutter />
        <Doc>
          <DocTabs>
            {tabs.map(t => <DocTab key={t.t} $w={t.w} $pl={t.pl} $slant={t.s}>{t.t}</DocTab>)}
            <DocTab $w={129} $pl={33} $active $slant>装配图.dwg<TabClose>×</TabClose></DocTab>
          </DocTabs>
          <Drawing />
          <SheetTabs>
            <NavBtns>
              <I w={16} h={14}><path d="M3 4V10M9 4 5 7 9 10z" stroke="#666" fill="#666" /></I>
              <I w={16} h={14}><path d="M10 4 6 7 10 10z" fill="#666" stroke="#666" /></I>
              <I w={16} h={14}><path d="M6 4 10 7 6 10z" fill="#666" stroke="#666" /></I>
              <I w={14} h={14}><path d="M11 4V10M3 4 7 7 3 10z" stroke="#666" fill="#666" /></I>
            </NavBtns>
            <ModelTab>模型</ModelTab>
            <LayoutTab>Layout1</LayoutTab>
          </SheetTabs>
        </Doc>
      </Work>
      <Sash />
      <CmdHead>命令行</CmdHead>
      <Terminal>正在打开 AutoCAD 2007 Drawing 文件</Terminal>
      <Watermark>CSDN @biyezuopinvip</Watermark>
    </Page>
  );
}
